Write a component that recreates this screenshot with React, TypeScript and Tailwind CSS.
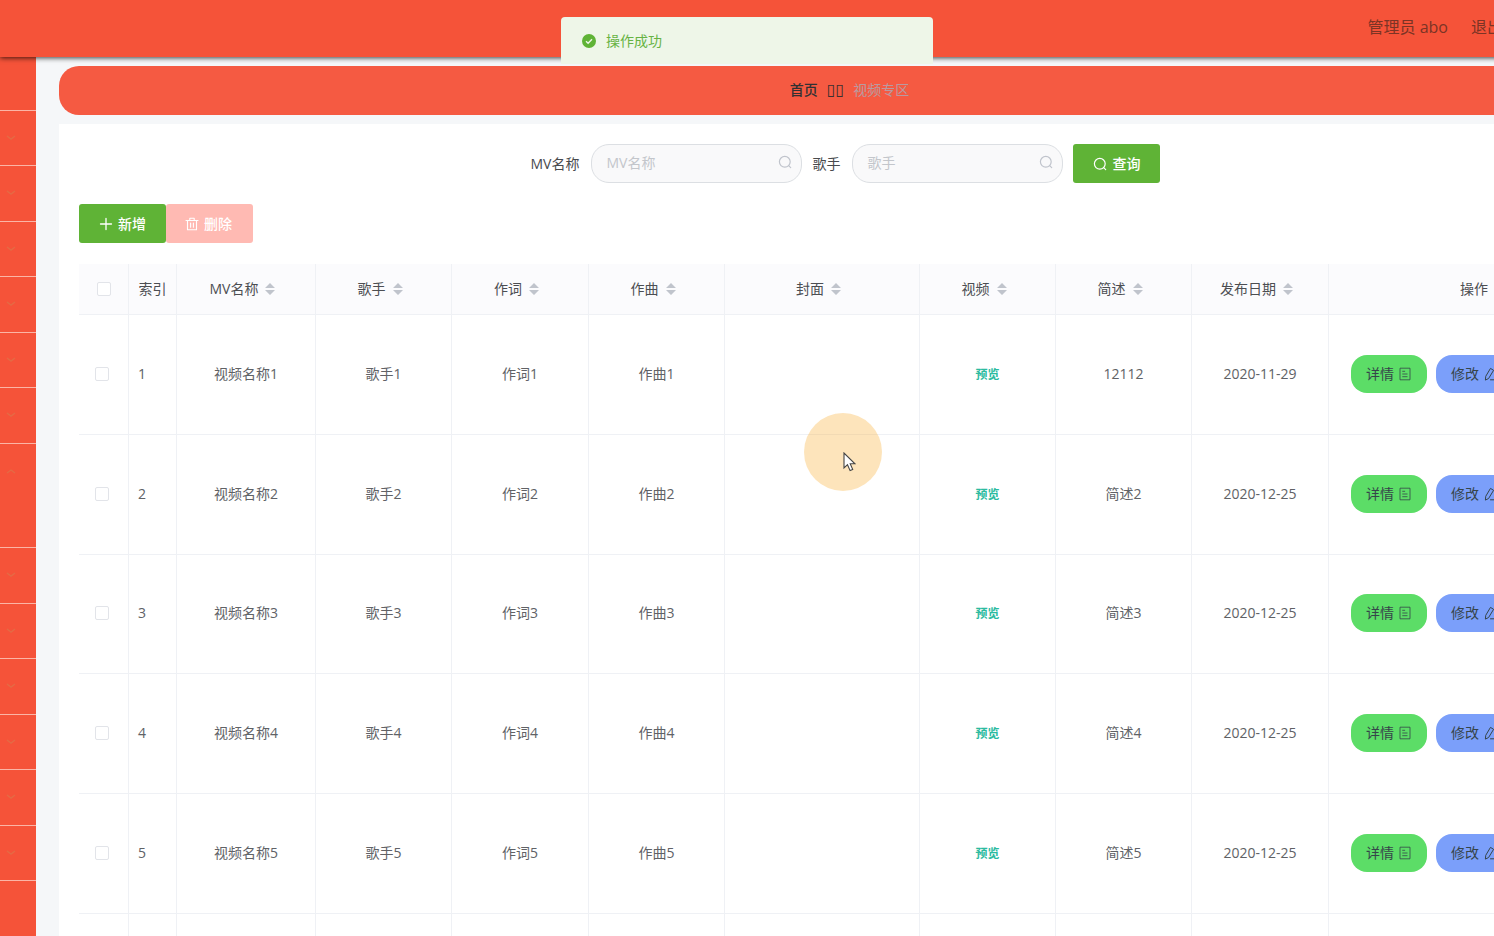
import React from 'react';

type Mv = {
  id: number;
  name: string;
  singer: string;
  lyricist: string;
  composer: string;
  summary: string;
  date: string;
};

const rows: Mv[] = [
  { id: 1, name: '视频名称1', singer: '歌手1', lyricist: '作词1', composer: '作曲1', summary: '12112', date: '2020-11-29' },
  { id: 2, name: '视频名称2', singer: '歌手2', lyricist: '作词2', composer: '作曲2', summary: '简述2', date: '2020-12-25' },
  { id: 3, name: '视频名称3', singer: '歌手3', lyricist: '作词3', composer: '作曲3', summary: '简述3', date: '2020-12-25' },
  { id: 4, name: '视频名称4', singer: '歌手4', lyricist: '作词4', composer: '作曲4', summary: '简述4', date: '2020-12-25' },
  { id: 5, name: '视频名称5', singer: '歌手5', lyricist: '作词5', composer: '作曲5', summary: '简述5', date: '2020-12-25' },
  { id: 6, name: '视频名称6', singer: '歌手6', lyricist: '作词6', composer: '作曲6', summary: '简述6', date: '2020-12-25' },
];

const sortable = ['MV名称', '歌手', '作词', '作曲', '封面', '视频', '简述', '发布日期'];

const menu = Array.from({ length: 13 }, (_, i) => ({ id: i, open: i === 6 }));

const SearchIcon = ({ className = '' }: { className?: string }) => (
  <svg viewBox="0 0 14 14" className={`size-[14px] shrink-0 ${className}`} fill="none" stroke="currentColor" strokeWidth="1.2">
    <circle cx="6.8" cy="6.8" r="5.4" />
    <path d="M10.7 10.7l2 2" strokeLinecap="round" />
  </svg>
);

const PlusIcon = () => (
  <svg viewBox="0 0 14 14" className="size-[14px] shrink-0" fill="none" stroke="currentColor" strokeWidth="1.3">
    <path d="M7 1.5v11M1.5 7h11" strokeLinecap="round" />
  </svg>
);

const TrashIcon = () => (
  <svg viewBox="0 0 14 14" className="size-[14px] shrink-0" fill="none" stroke="currentColor" strokeWidth="1.1">
    <path d="M1 3.5h12M4.8 3.3V1.3h4.4v2M2.5 3.5v9.2h9V3.5M5.6 6v4.2M8.4 6v4.2" strokeLinecap="round" strokeLinejoin="round" />
  </svg>
);

const DocIcon = () => (
  <svg viewBox="0 0 14 14" className="size-[14px] shrink-0" fill="none" stroke="currentColor" strokeWidth="0.8">
    <path d="M2 1.2h10v11.6H2zM4.3 4.3h2.8M4.3 7h5.2M4.3 9.7h5.2" />
  </svg>
);

const EditIcon = () => (
  <svg viewBox="0 0 14 14" className="size-[14px] shrink-0" fill="none" stroke="currentColor" strokeWidth="1">
    <path d="M7.8 1.6l2.8 1.7-5 8.2-3.2 1.6.3-3.4zM7.5 12.8h5.5" strokeLinejoin="round" strokeLinecap="round" />
  </svg>
);

const SortCaret = () => (
  <svg viewBox="0 0 24 14" className="h-[14px] w-6 shrink-0" fill="#c0c4cc">
    <path d="M12 1l5 5H7zM12 13l5-5H7z" />
  </svg>
);

const Chevron = ({ open }: { open: boolean }) => (
  <svg viewBox="0 0 12 12" className="size-3" fill="none" stroke="#e46a45" strokeWidth="1.4">
    <path d={open ? 'M2 8l4-3 4 3' : 'M2 4l4 3 4-3'} />
  </svg>
);

const SearchField = ({ id, label }: { id: string; label: string }) => (
  <div className="mr-[10px] flex items-center">
    <label htmlFor={id} className="pr-3 text-[#484a4d]">{label}</label>
    <div className="relative">
      <input
        id={id}
        type="text"
        placeholder={label}
        className="h-[39px] w-[211px] rounded-[18px] border border-[#dcdfe3] bg-[#f9f9fa] px-[14px] pb-[2px] placeholder:text-[#c3c6cb] outline-none"
      />
      <SearchIcon className="absolute right-[10px] top-[11px] text-[#c0c4cc]" />
    </div>
  </div>
);

const check = 'block size-[14px] appearance-none rounded-[2px] border border-[#e2e4e9] bg-white';
const th = 'border-b border-r border-[#eff1f5] font-normal';
const td = 'border-b border-r border-[#eff1f5] pb-[2px] text-center';

export default function App() {
  return (
    <div className="h-screen overflow-hidden bg-[#f5f7f9] font-['Open_Sans','Noto_Sans_CJK_SC',sans-serif] text-sm leading-5 text-[#606266]">
      <div className="flex h-full min-w-[1640px] flex-col">
        <header className="relative z-10 flex h-[57px] shrink-0 items-center justify-end gap-[23px] bg-[#f55339] pb-1 pr-[105px] text-base text-[#7b3425] shadow-[0_1px_5px_rgba(0,0,0,0.75)]">
          <span>管理员 abo</span>
          <a href="#logout">退出登录</a>
        </header>

        <div className="flex min-h-0 flex-1">
          <nav className="w-9 shrink-0 bg-[#f55339]">
            <div className="h-[54px] border-b border-[#fbb5a6]" />
            <ul>
              {menu.map((m) => (
                <li
                  key={m.id}
                  className={`border-b border-[#fbb5a6] ${m.open ? 'h-[104px]' : 'odd:h-[55px] even:h-14'}`}
                >
                  <button aria-label={m.open ? '收起' : '展开'} className="flex h-[54px] w-full items-center pl-[5px]">
                    <Chevron open={m.open} />
                  </button>
                </li>
              ))}
            </ul>
          </nav>

          <main className="min-w-0 flex-1 pl-[23px] pt-[9px]">
            <div className="flex h-[49px] items-center justify-center gap-[9px] rounded-[20px] bg-[#f55a42] pb-[2px]">
              <a href="#home" className="font-medium text-[#303133]">首页</a>
              <span className="font-['DejaVu_Sans'] text-base leading-5 text-[#3c3030]">▯▯</span>
              <span className="text-[#b99aa0]">视频专区</span>
            </div>

            <section className="mt-[9px] bg-white p-5">
              <form className="flex justify-center pl-[2px]" onSubmit={(e) => e.preventDefault()}>
                <SearchField id="mv" label="MV名称" />
                <SearchField id="singer" label="歌手" />
                <button className="mr-[10px] flex h-[39px] w-[87px] items-center justify-center gap-[5px] rounded-[3px] bg-[#5fb336] font-medium text-white">
                  <SearchIcon />
                  查询
                </button>
              </form>

              <div className="mt-[21px] flex">
                <button className="flex h-[39px] w-[87px] items-center justify-center gap-[5px] rounded-[3px] bg-[#5fb336] font-medium text-white">
                  <PlusIcon />
                  新增
                </button>
                <button disabled className="flex h-[39px] w-[87px] items-center justify-center gap-[5px] rounded-[3px] bg-[#ffbab3] pr-[2px] font-medium text-white">
                  <TrashIcon />
                  删除
                </button>
              </div>

              <table className="mt-[21px] w-full table-fixed border-separate border-spacing-0">
                <colgroup>
                  <col className="w-[50px]" />
                  <col className="w-12" />
                  <col className="w-[139px]" />
                  <col className="w-[136px]" />
                  <col className="w-[137px]" />
                  <col className="w-[136px]" />
                  <col className="w-[195px]" />
                  <col className="w-[136px]" />
                  <col className="w-[136px]" />
                  <col className="w-[137px]" />
                  <col />
                </colgroup>
                <thead>
                  <tr className="h-[51px] bg-[#fbfbfd] text-[#4c4e52]">
                    <th className={`${th} pl-[18px]`}>
                      <input type="checkbox" aria-label="全选" className={check} />
                    </th>
                    <th className={th}>索引</th>
                    {sortable.map((label) => (
                      <th key={label} className={th}>
                        <div className="flex items-center justify-center">
                          {label}
                          <SortCaret />
                        </div>
                      </th>
                    ))}
                    <th className={th}>操作</th>
                  </tr>
                </thead>
                <tbody>
                  {rows.map((r) => (
                    <tr key={r.id} className="h-[120px] nth-[3n]:h-[119px]">
                      <td className={`${td} pl-4`}>
                        <input type="checkbox" aria-label={r.name} className={check} />
                      </td>
                      <td className="border-b border-r border-[#eff1f5] pb-[2px] pl-[9px]">{r.id}</td>
                      <td className={td}>{r.name}</td>
                      <td className={td}>{r.singer}</td>
                      <td className={td}>{r.lyricist}</td>
                      <td className={td}>{r.composer}</td>
                      <td className={td} />
                      <td className={td}>
                        <a href="#preview" className="text-xs font-bold text-[#2cbb9f]">预览</a>
                      </td>
                      <td className={td}>{r.summary}</td>
                      <td className={td}>{r.date}</td>
                      <td className={td}>
                        <div className="flex justify-center gap-[9px] text-[#36454a]">
                          <button className="flex h-[38px] w-[76px] items-center justify-center gap-1 rounded-2xl bg-[#5cdd67]">
                            详情
                            <DocIcon />
                          </button>
                          <button className="flex h-[38px] w-[76px] items-center justify-center gap-1 rounded-2xl bg-[#7b9ffa]">
                            修改
                            <EditIcon />
                          </button>
                          <button className="flex h-[38px] w-[76px] items-center justify-center gap-1 rounded-2xl bg-[#f78989]">
                            删除
                            <TrashIcon />
                          </button>
                        </div>
                      </td>
                    </tr>
                  ))}
                </tbody>
              </table>
            </section>
          </main>
        </div>
      </div>

      {/* success message */}
      <div role="status" className="fixed inset-x-0 top-[17px] z-20 mx-auto flex h-[47px] w-[372px] items-center gap-[10px] rounded-t bg-[#eef6e8] pl-[21px] text-[#67b344]">
        <svg viewBox="0 0 14 14" className="size-[14px]">
          <circle cx="7" cy="7" r="7" fill="#5fb336" />
          <path d="M4 7.2l2.1 2 3.9-4" fill="none" stroke="#eef6e8" strokeWidth="1.4" />
        </svg>
        操作成功
      </div>

      {/* pointer with highlight */}
      <div className="pointer-events-none fixed left-[804px] top-[413px] z-20 size-[78px] rounded-full bg-[#f9a51f]/30">
        <svg viewBox="0 0 13 20" className="absolute left-[39px] top-[39px] h-5 w-[13px]">
          <path d="M1 1v15l3.5-3.3 2.6 5.9 2.6-1.2-2.5-5.6H12z" fill="#fff" stroke="#444" strokeWidth="1.1" />
        </svg>
      </div>
    </div>
  );
}
